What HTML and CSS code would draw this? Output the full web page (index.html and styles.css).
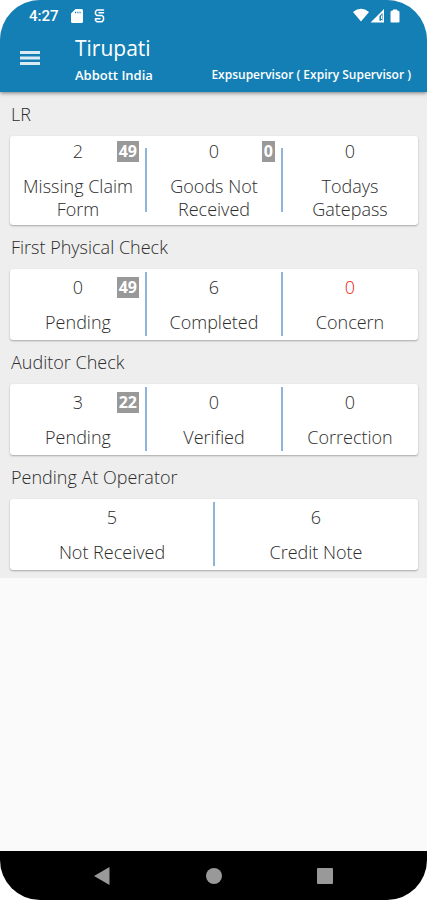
FILE: index.html
```html
<!DOCTYPE html>
<html lang="en">
<head>
<meta charset="utf-8">
<meta name="viewport" content="width=device-width, initial-scale=1">
<title>Tirupati</title>
<link rel="stylesheet" href="styles.css">
</head>
<body>
<div class="screen">
  <header class="header">
    <div class="status">
      <span class="clock">4:27</span>
      <svg class="status-sd" width="12" height="14" viewBox="0 0 12 14" aria-hidden="true"><path fill="#fff" fill-rule="evenodd" d="M4.500 0H10.500Q12 0 12 1.500V12.500Q12 14 10.500 14H1.500Q0 14 0 12.500V4.500ZM4 2.800V4.200H5.200V2.800ZM6.300 2.800V4.200H7.400V2.800ZM8.500 2.800V4.200H9.600V2.800Z"/></svg>
      <svg class="status-s" width="11" height="14" viewBox="0 0 11 14" aria-hidden="true"><path fill="none" stroke="#fff" stroke-width="1.500" stroke-linejoin="round" stroke-linecap="round" d="M9.500 3.800H5M9.500 1H3L1.500 2.500V5L3 6.500H8L9.500 8V11L8 12.800H3L1.500 11.500V9.800H6"/></svg>
      <svg class="status-right" width="48" height="16" viewBox="0 0 48 16" aria-hidden="true"><g fill="#fff"><path d="M0 4Q8 -2.500 16 4L8 13.500Z"/><path fill-rule="evenodd" d="M31 1V14.500H17.500ZM29.500 5L26.500 8V12.800H29.500Z"/><path d="M28 7.500H29V11H28ZM28 12H29V13H28Z"/><path d="M40 1.500H44V2.500H45Q46.500 3 46.500 4V13.500Q46.500 14.500 45.500 14.500H38.500Q37.500 14.500 37.500 13.500V4Q37.500 3 39 2.500H40Z"/></g></svg>
    </div>
    <div class="toolbar">
      <button class="menu" type="button" aria-label="Menu">
        <svg width="20" height="14" viewBox="0 0 20 14" aria-hidden="true"><path fill="#d9ebf5" d="M0 0H20V3H0ZM0 5.500H20V8.500H0ZM0 11H20V14H0Z"/></svg>
      </button>
      <div class="heading">
        <h1 class="title">Tirupati</h1>
        <div class="subtitle"><span>Abbott India</span><span class="role">Expsupervisor ( Expiry Supervisor )</span></div>
      </div>
    </div>
  </header>
  <main class="main">
    <section>
      <h2 class="section-title">LR</h2>
      <div class="card">
        <div class="cell"><span class="num">2</span><span class="label">Missing Claim Form</span><span class="badge">49</span></div>
        <div class="cell"><span class="num">0</span><span class="label">Goods Not Received</span><span class="badge">0</span></div>
        <div class="cell"><span class="num">0</span><span class="label">Todays Gatepass</span></div>
      </div>
    </section>
    <section>
      <h2 class="section-title">First Physical Check</h2>
      <div class="card">
        <div class="cell"><span class="num">0</span><span class="label">Pending</span><span class="badge">49</span></div>
        <div class="cell"><span class="num">6</span><span class="label">Completed</span></div>
        <div class="cell"><span class="num alert">0</span><span class="label">Concern</span></div>
      </div>
    </section>
    <section>
      <h2 class="section-title">Auditor Check</h2>
      <div class="card">
        <div class="cell"><span class="num">3</span><span class="label">Pending</span><span class="badge">22</span></div>
        <div class="cell"><span class="num">0</span><span class="label">Verified</span></div>
        <div class="cell"><span class="num">0</span><span class="label">Correction</span></div>
      </div>
    </section>
    <section>
      <h2 class="section-title">Pending At Operator</h2>
      <div class="card">
        <div class="cell"><span class="num">5</span><span class="label">Not Received</span></div>
        <div class="cell"><span class="num">6</span><span class="label">Credit Note</span></div>
      </div>
    </section>
  </main>
  <nav class="navbar">
    <button class="nav-btn" type="button" aria-label="Back"><svg width="18" height="18" viewBox="0 0 18 18" aria-hidden="true"><path fill="#999" d="M16.500 0V18L1 9Z"/></svg></button>
    <button class="nav-btn" type="button" aria-label="Home"><svg width="18" height="18" viewBox="0 0 18 18" aria-hidden="true"><circle fill="#999" cx="9" cy="9" r="8"/></svg></button>
    <button class="nav-btn" type="button" aria-label="Recents"><svg width="18" height="18" viewBox="0 0 18 18" aria-hidden="true"><rect fill="#999" x="1" y="1" width="16" height="16" rx="1"/></svg></button>
  </nav>
</div>
</body>
</html>
```
FILE: styles.css
```css
* { box-sizing: border-box; }

body {
  margin: 0;
  background: #fff;
  color: #2c2c2c;
  font-family: "Open Sans", "Noto Sans", sans-serif;
  font-size: 18px;
  font-weight: 300;
}

button {
  padding: 0;
  border: 0;
  background: none;
  display: flex;
  align-items: center;
  justify-content: center;
}

.screen {
  min-height: 100vh;
  display: flex;
  flex-direction: column;
  background: #fafafa;
  border-radius: 40px;
  overflow: hidden;
}

.header {
  position: relative;
  background: #147fb5;
  color: #fff;
  box-shadow: 0 1px 4px rgba(0, 0, 0, 0.5);
}

.status {
  height: 32px;
  padding: 0 26px 0 29px;
  display: flex;
  align-items: center;
}

.clock {
  font-family: Roboto, sans-serif;
  font-size: 15px;
  font-weight: 500;
}

.status-sd { margin-left: 12px; }
.status-s { margin-left: 11px; }
.status-right { margin-left: auto; }

.toolbar {
  height: 60px;
  padding: 0 16px 0 20px;
  display: flex;
}

.menu {
  width: 20px;
  height: 52px;
}

.heading {
  flex: 1;
  margin-left: 35px;
}

.title {
  margin: 0;
  font-size: 21px;
  font-weight: 400;
  line-height: 32px;
}

.subtitle {
  display: flex;
  justify-content: space-between;
  font-size: 13px;
  font-weight: 600;
  line-height: 22px;
}

.role { font-size: 12px; }

.main {
  padding: 0 9px 8px 10px;
  background: #eee;
}

.section-title {
  margin: 0;
  padding-left: 1px;
  font-size: 18px;
  font-weight: 300;
  line-height: 44px;
}

.card {
  min-height: 71px;
  padding: 4px 0;
  display: flex;
  align-items: center;
  background: #fff;
  border-radius: 3px;
  box-shadow: 0 1px 2px rgba(0, 0, 0, 0.3);
}

.cell {
  position: relative;
  flex: 1 1 0;
  padding: 0 8px;
  display: flex;
  flex-direction: column;
  align-items: center;
  gap: 12px;
  line-height: 23px;
  text-align: center;
}

.cell + .cell::before {
  content: "";
  position: absolute;
  left: -1px;
  top: 50%;
  width: 2px;
  height: 64px;
  margin-top: -33px;
  background: #8fb4da;
}

.alert { color: #f02010; }

.badge {
  position: absolute;
  top: 1px;
  right: 7px;
  padding: 0 2px;
  background: #999;
  color: #fff;
  font-size: 16px;
  font-weight: 700;
  line-height: 21px;
}

.navbar {
  height: 49px;
  margin-top: auto;
  padding: 0 46px;
  display: flex;
  background: #000;
}

.nav-btn { flex: 1; }
```
